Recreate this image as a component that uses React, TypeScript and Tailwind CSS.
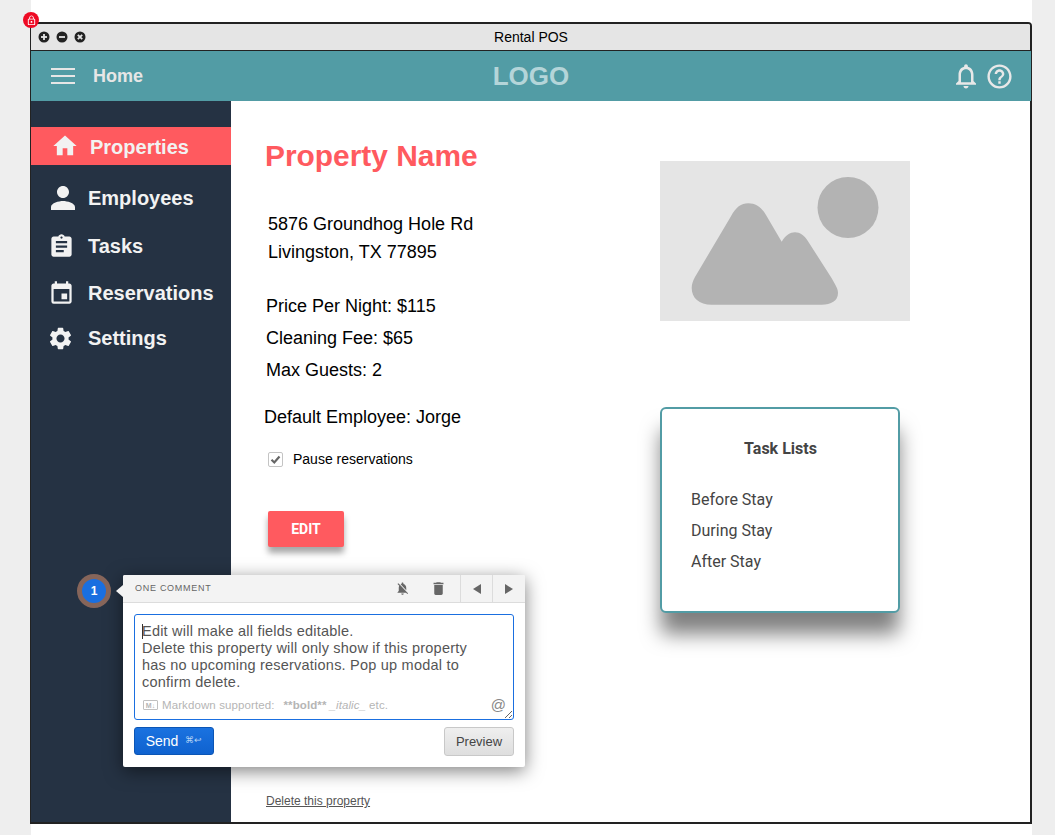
import { MdHome, MdPerson, MdAssignment, MdEvent, MdSettings, MdNotificationsNone, MdHelpOutline, MdNotificationsOff, MdDelete, MdLockOutline } from 'react-icons/md'

const NAV = [
  { label: 'Employees', Icon: MdPerson, size: 36, box: 'mt-[17px] h-[32px] pl-[14px] gap-[7px]' },
  { label: 'Tasks', Icon: MdAssignment, size: 27, box: 'mt-[16px] h-[32px] pl-[17px] gap-[13px]' },
  { label: 'Reservations', Icon: MdEvent, size: 27, box: 'mt-[15px] h-[32px] pl-[17px] gap-[13px]' },
  { label: 'Settings', Icon: MdSettings, size: 27, box: 'mt-[13px] h-[32px] pl-[16px] gap-[14px]' },
]

function WindowButton({ kind }: { kind: 'plus' | 'minus' | 'close' }) {
  return (
    <svg width="12" height="12" viewBox="0 0 12 12">
      <circle cx="6" cy="6" r="5.5" fill="#222" />
      {kind !== 'close' && <path d="M3 6h6" stroke="#e5e5e5" strokeWidth="1.8" />}
      {kind === 'plus' && <path d="M6 3v6" stroke="#e5e5e5" strokeWidth="1.8" />}
      {kind === 'close' && <path d="M3.8 3.8l4.4 4.4M8.2 3.8l-4.4 4.4" stroke="#e5e5e5" strokeWidth="1.8" />}
    </svg>
  )
}

function Sidebar() {
  return (
    <aside className="w-[200px] shrink-0 bg-[#253243] pt-[26px] font-['Liberation_Sans',sans-serif] text-[20px] font-bold text-[#f2f2f2]">
      <div className="flex h-[38px] items-center gap-[11px] bg-[#ff5a5f] pl-[20px]">
        <MdHome size={28} />
        <span className="pt-[1px]">Properties</span>
      </div>
      {NAV.map(({ label, Icon, size, box }) => (
        <div key={label} className={`flex items-center ${box}`}>
          <Icon size={size} className="shrink-0" />
          <span>{label}</span>
        </div>
      ))}
    </aside>
  )
}

function PropertyDetails() {
  return (
    <div className="w-[395px] shrink-0 pt-[36px] pl-[33px] font-['Liberation_Sans',sans-serif] text-[18px] text-black">
      <h1 className="ml-[1px] text-[29.9px] leading-[38px] font-bold text-[#ff5a5f]">Property Name</h1>
      <div className="mt-[35px] ml-[4px] leading-[28px]">
        <p>5876 Groundhog Hole Rd</p>
        <p>Livingston, TX 77895</p>
      </div>
      <div className="mt-[24px] ml-[2px] leading-[32px]">
        <p>Price Per Night: $115</p>
        <p>Cleaning Fee: $65</p>
        <p>Max Guests: 2</p>
      </div>
      <p className="mt-[15px] leading-[32px]">Default Employee: Jorge</p>
      <label className="mt-[18px] ml-[4px] flex h-[16px] items-center gap-[10px] text-[14px]">
        <span className="flex h-[15px] w-[15px] items-center justify-center rounded-[2px] border border-[#c4c4c4] bg-white">
          <svg width="11" height="11" viewBox="0 0 11 11">
            <path d="M1.5 5.8l2.8 2.7 5.2-6" fill="none" stroke="#666" strokeWidth="2.2" />
          </svg>
        </span>
        Pause reservations
      </label>
      <button className="mt-[44px] ml-[4px] block h-[36px] w-[76px] rounded-[2px] bg-[#ff5a5f] font-['Roboto',sans-serif] text-[14px] font-bold text-white shadow-[0_6px_6px_rgba(0,0,0,0.35)]">
        EDIT
      </button>
      <a className="mt-[247px] ml-[2px] block text-[12px] leading-[14px] text-[#555] underline">Delete this property</a>
    </div>
  )
}

function SidePanels() {
  return (
    <div className="pt-[60px] pl-[34px]">
      <div className="h-[160px] w-[250px] bg-[#e5e5e5]">
        <svg width="250" height="160" viewBox="0 0 250 160">
          <circle cx="188" cy="46.5" r="30.5" fill="#b3b3b3" />
          <path d="M35 116 L70.7 55.7 C76 46 81 42.3 88.3 42.3 C96 42.3 102 47 106 54 L121.7 80.7 C126 74 130 71.3 135 71.3 C140 71.3 144 74 148.3 80.7 L171.7 117.3 C176 125 178 128 178 132 C178 140 171 143.7 161.7 143.7 L51.7 143.7 C39 143.7 31.7 137 31.7 127 C31.7 123 33 120 35 116Z" fill="#b3b3b3" />
        </svg>
      </div>
      <div className="mt-[86px] h-[206px] w-[240px] rounded-[6px] border-2 border-[#529ca5] bg-white pt-[29px] pl-[29px] font-['Roboto',sans-serif] text-[16px] text-[#444] shadow-[0_22px_20px_-1px_rgba(0,0,0,0.5)]">
        <h2 className="pr-[28px] text-center leading-[22px] font-bold">Task Lists</h2>
        <ul className="mt-[24px] leading-[31px]">
          <li>Before Stay</li>
          <li>During Stay</li>
          <li>After Stay</li>
        </ul>
      </div>
    </div>
  )
}

function CommentPopover() {
  return (
    <div className="absolute top-[575px] left-[78px] flex items-center font-['Liberation_Sans',sans-serif]">
      <div className="absolute top-[-1px] left-[-1px] flex h-[34px] w-[34px] items-center justify-center rounded-full border-[5px] border-[#86655a] bg-[#1a6fe0] text-[12px] font-bold text-white">1</div>
      <div className="absolute top-[10px] left-[38px] h-0 w-0 border-y-[6px] border-r-[7px] border-y-transparent border-r-[#f3f3f3]" />
      <div className="ml-[45px] h-[192px] w-[402px] overflow-hidden rounded-[2px] bg-white shadow-[0_4px_18px_rgba(0,0,0,0.5)]">
        <div className="flex h-[28px] items-center border-b border-[#dcdcdc] bg-[#f3f3f3] pl-[12px] text-[9px] tracking-[0.08em] text-[#666]">
          <span className="flex-1">ONE COMMENT</span>
          <MdNotificationsOff size={15} className="mr-[20px] text-[#666]" />
          <MdDelete size={17} className="mr-[13px] text-[#666]" />
          <span className="flex h-full w-[32px] items-center justify-center border-l border-[#dcdcdc]">
            <span className="h-0 w-0 border-y-[5px] border-r-[8px] border-y-transparent border-r-[#666]" />
          </span>
          <span className="flex h-full w-[33px] items-center justify-center border-l border-[#dcdcdc]">
            <span className="h-0 w-0 border-y-[5px] border-l-[8px] border-y-transparent border-l-[#666]" />
          </span>
        </div>
        <div className="relative mx-[11px] mt-[11px] h-[106px] rounded-[3px] border border-[#1a6fe0] px-[7px] pt-[8px] text-[14.5px] leading-[17px] tracking-[0.22px] text-[#555]">
          <span className="absolute top-[9px] left-[7px] h-[15px] w-px bg-[#333]" />
          <p>Edit will make all fields editable.</p>
          <p>Delete this property will only show if this property</p>
          <p>has no upcoming reservations. Pop up modal to</p>
          <p>confirm delete.</p>
          <div className="absolute right-[7px] bottom-[7px] left-[8px] flex items-center text-[11.5px] leading-[14px] tracking-[0.1px] text-[#b5b5b5]">
            <span className="mr-[4px] flex h-[10px] w-[15px] items-center justify-center rounded-[1px] border border-[#c0c0c0] text-[7px] leading-[9px] font-bold tracking-normal">M↓</span>
            <span className="mr-[9px]">Markdown supported:</span>
            <b>**bold**</b>
            <i className="mx-[3px]">_italic_</i>
            <span className="flex-1">etc.</span>
            <span className="text-[15px] text-[#888]">@</span>
          </div>
          <svg className="absolute right-[1px] bottom-[1px]" width="8" height="8" viewBox="0 0 8 8">
            <path d="M1 8l7-7M5 8l3-3" stroke="#666" strokeWidth="1" />
          </svg>
        </div>
        <div className="mx-[11px] mt-[7px] flex items-start justify-between">
          <button className="flex h-[28px] w-[80px] items-center justify-center gap-[7px] rounded-[3px] border border-[#0b55b5] bg-gradient-to-b from-[#1a72e0] to-[#0f62cf] text-[14px] text-white">
            Send <span className="text-[9px] text-[#b5d2f5]">⌘↩</span>
          </button>
          <button className="h-[29px] w-[70px] rounded-[3px] border border-[#c8c8c8] bg-gradient-to-b from-[#efefef] to-[#dedede] text-[13px] text-[#444]">Preview</button>
        </div>
      </div>
    </div>
  )
}

export default function App() {
  return (
    <div className="relative flex h-[835px] overflow-hidden bg-white">
      <div className="w-[31px] shrink-0 bg-[#eeeeee]" />
      <div className="w-[1001px] shrink-0">
        <div className="relative z-10 mt-[22px] -ml-px flex h-[802px] w-[1002px] flex-col rounded-t-[4px] border-t-2 border-r-2 border-b-2 border-l border-[#222]">
          <div className="relative flex h-[27px] shrink-0 items-center justify-center rounded-t-[2px] border-b border-[#222] bg-[#e5e5e5] pl-[1px] font-['Liberation_Sans',sans-serif] text-[14px] text-black">
            <div className="absolute left-[7px] flex gap-[6px]">
              <WindowButton kind="plus" />
              <WindowButton kind="minus" />
              <WindowButton kind="close" />
            </div>
            Rental POS
          </div>
          <header className="relative -mr-px flex h-[50px] shrink-0 items-center justify-center bg-[#529ca5] pr-px font-['Liberation_Sans',sans-serif]">
            <div className="absolute left-[20px] flex items-center gap-[18px]">
              <div className="flex w-[24px] flex-col gap-[5px]">
                <span className="h-[2px] bg-[#e6e6e6]" />
                <span className="h-[2px] bg-[#e6e6e6]" />
                <span className="h-[2px] bg-[#e6e6e6]" />
              </div>
              <span className="pt-[1px] text-[18px] font-bold text-[#e6e6e6]">Home</span>
            </div>
            <span className="ml-[1px] text-[26px] font-bold text-[#b4d5d9]">LOGO</span>
            <div className="absolute right-[17px] flex items-center text-[#e8e8e8]">
              <MdNotificationsNone size={30} className="mr-[4px]" />
              <MdHelpOutline size={29} />
            </div>
          </header>
          <div className="flex min-h-0 flex-1">
            <Sidebar />
            <main className="flex min-w-0 flex-1 bg-white">
              <PropertyDetails />
              <SidePanels />
            </main>
          </div>
        </div>
      </div>
      <div className="flex-1 bg-[#eeeeee]" />
      <div className="absolute top-[12px] left-[23px] z-20 flex h-[16px] w-[16px] items-center justify-center rounded-full bg-[#ee0a24] text-white">
        <MdLockOutline size={11} />
      </div>
      <div className="absolute inset-0 z-20">
        <CommentPopover />
      </div>
    </div>
  )
}
